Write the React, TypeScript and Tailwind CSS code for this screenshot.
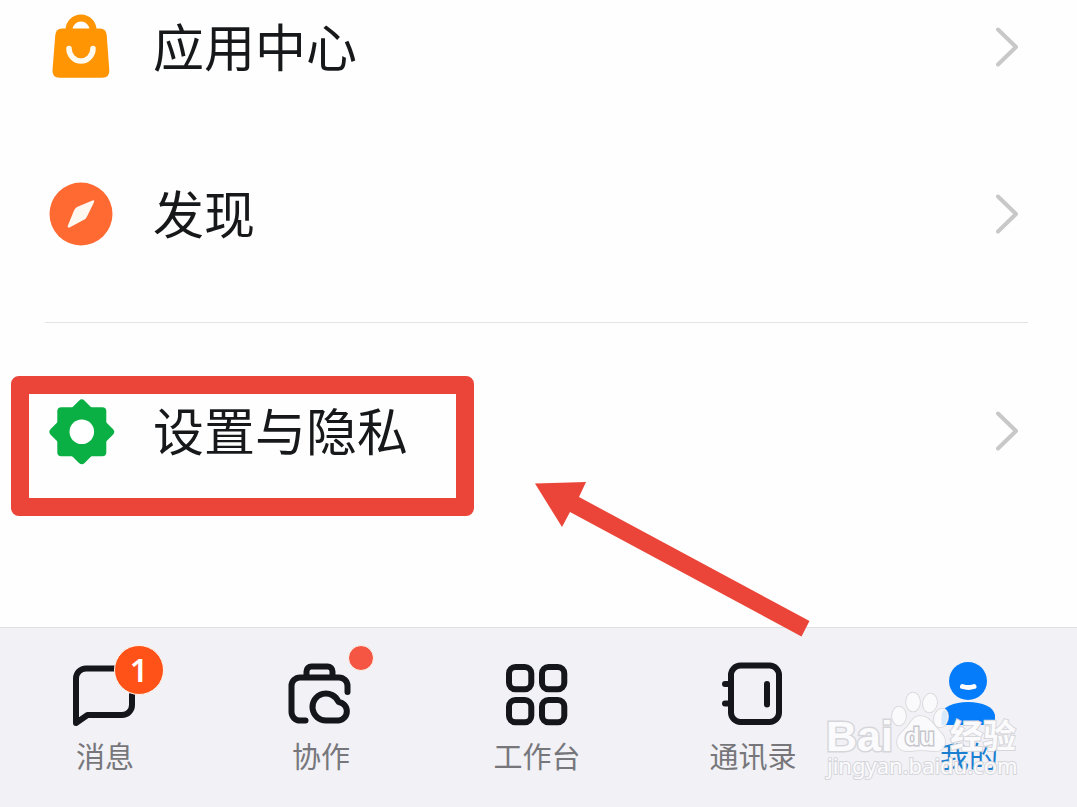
import type { ReactNode } from "react";

const BagIcon = () => (
  <svg viewBox="0 0 64 64" className="h-16 w-16 shrink-0 overflow-visible" aria-hidden="true">
    <path d="M20 17v-2a12 12 0 0 1 24 0v2" fill="none" stroke="#ff9502" strokeWidth="7" />
    <path
      d="M13 13.500h38q6 0 6.700 6.500l2.600 35q.5 7.700-7 7.700H10.500q-7.500 0-7-7.700l2.800-35q.7-6.500 6.700-6.500z"
      fill="#ff9502"
    />
    <path d="M20 33.500a12 12.500 0 0 0 24 0" fill="none" stroke="#fffaf0" strokeWidth="5.500" strokeLinecap="round" />
  </svg>
);

const CompassIcon = () => (
  <svg viewBox="0 0 64 64" className="h-16 w-16 shrink-0" aria-hidden="true">
    <circle cx="32" cy="32" r="31.500" fill="#ff6a33" />
    <path
      d="M28 25L43.500 18.400q2.500-.6 1.500 1.800L38 34.500q-1 2.500-3.500 3.600L20.500 45.600q-2.500.4-1.600-2L25 28.500q1-2.500 3-3.500z"
      fill="#fff8f0"
    />
  </svg>
);

const GearIcon = () => (
  <svg viewBox="0 0 64 64" className="h-16 w-16 shrink-0 overflow-visible" aria-hidden="true">
    <g fill="#0bb045">
      <rect x="8.300" y="8.300" width="49" height="49" rx="4" />
      <rect x="8.800" y="8.800" width="48" height="48" rx="4" transform="rotate(45 32.800 32.800)" />
    </g>
    <circle cx="32.800" cy="32.800" r="12.300" fill="#fff" />
  </svg>
);

const Chevron = () => (
  <svg viewBox="0 0 24 40" className="h-10 w-6 shrink-0" aria-hidden="true">
    <path d="M2 2.500l18 17.500L2 37.500" fill="none" stroke="#c8c8c8" strokeWidth="4" strokeLinecap="round" strokeLinejoin="round" />
  </svg>
);

function TabIcon({ children }: { children: ReactNode }) {
  return (
    <svg
      viewBox="0 0 72 72"
      className="h-[72px] w-[72px]"
      fill="none"
      stroke="#15151c"
      strokeWidth="6"
      strokeLinecap="round"
      strokeLinejoin="round"
      aria-hidden="true"
    >
      {children}
    </svg>
  );
}

const tabs = [
  {
    label: "消息",
    icon: (
      <TabIcon>
        <path d="M46 9.500H17a10 10 0 0 0-10 10V64L18.500 56H53a10 10 0 0 0 10-10V36" />
      </TabIcon>
    ),
    badge: (
      <span className="absolute -top-3.5 left-[45px] flex h-[50px] w-[50px] items-center justify-center rounded-full border border-[#fff4ea] bg-[#ff5219] font-['Noto_Sans',sans-serif] text-[32px] leading-none font-semibold text-white">
        1
      </span>
    ),
  },
  {
    label: "协作",
    icon: (
      <TabIcon>
        <path d="M21.500 17v-4.500a5 5 0 0 1 5-5h16a5 5 0 0 1 5 5V17" />
        <path d="M20.500 61.500H15a8.500 8.500 0 0 1-8.500-8.500V27a8.500 8.500 0 0 1 8.500-8.500h39a8.500 8.500 0 0 1 8.500 8.500v6" />
        <path d="M41 61.500A13.500 13.500 0 1 1 53.500 43a9.300 9.300 0 0 1 0 18.500z" />
      </TabIcon>
    ),
    badge: <span className="absolute -top-3.5 left-[63px] h-[26px] w-[26px] rounded-full border border-[#fff4ea] bg-[#f45643]" />,
  },
  {
    label: "工作台",
    icon: (
      <TabIcon>
        <rect x="8" y="8" width="22.300" height="22.300" rx="6.500" />
        <rect x="41" y="8" width="22.300" height="22.300" rx="6.500" />
        <rect x="8" y="41" width="22.300" height="22.300" rx="6.500" />
        <rect x="41" y="41" width="22.300" height="22.300" rx="6.500" />
      </TabIcon>
    ),
  },
  {
    label: "通讯录",
    icon: (
      <TabIcon>
        <rect x="14" y="6.500" width="48" height="56.500" rx="9.500" />
        <path d="M50 25v20.500" />
        <path d="M8 25h5M8 44.500h5" />
      </TabIcon>
    ),
  },
  {
    label: "我的",
    active: true,
    icon: (
      <TabIcon>
        <g stroke="none" fill="#057dfb">
          <circle cx="35" cy="22" r="19" />
          <path d="M8.500 66V56c1-8 12-13 26.500-13s25.500 5 27 13v10z" />
        </g>
        <path d="M29.500 27.500q6 2 11.500 0" stroke="#fff" strokeWidth="5" />
      </TabIcon>
    ),
  },
];

function Row({ icon, label }: { icon: ReactNode; label: string }) {
  return (
    <a href="#" className="flex h-16 items-center gap-10 pr-2 pl-1">
      {icon}
      <span className="flex-1 pb-1 text-[51px] leading-none text-[#17181a]">{label}</span>
      <Chevron />
    </a>
  );
}

function Watermark() {
  return (
    <svg
      viewBox="0 0 200 100"
      className="pointer-events-none absolute top-[59px] right-[54px] h-[100px] w-[200px]"
      fill="#fbfbfd"
      stroke="#d6d6da"
      strokeWidth="3"
      paintOrder="stroke"
    >
      <g fillOpacity="0.85" strokeWidth="1.500">
        <ellipse cx="76" cy="29" rx="7" ry="9.500" />
        <ellipse cx="90" cy="15" rx="7" ry="9.500" />
        <ellipse cx="107" cy="16" rx="7" ry="9.500" transform="rotate(10 107 16)" />
        <ellipse cx="118" cy="31" rx="7" ry="9.500" transform="rotate(15 118 31)" />
        <path d="M97 29c8 0 12 6 16 11 5 6 10 9 9 16-1 8-8 9-14 8-7-1-13-1-20 0-7 1-14-1-14-9 0-6 5-10 10-15 4-5 6-11 13-11z" />
      </g>
      <text x="3" y="64" className="font-['Liberation_Sans',sans-serif] text-[43px] font-bold">
        Bai
      </text>
      <text x="82" y="58" className="font-['Liberation_Sans',sans-serif] text-[24px] font-bold" stroke="#c6c6cb">
        du
      </text>
      <text x="127" y="61" className="font-['Noto_Sans_CJK_SC',sans-serif] text-[33px] font-bold" strokeWidth="2">
        经验
      </text>
      <text x="4" y="87" className="font-['Noto_Sans',sans-serif] text-[22px]" strokeWidth="2">
        jingyan.baidu.com
      </text>
    </svg>
  );
}

export default function App() {
  return (
    <div className="relative flex min-h-screen flex-col overflow-hidden bg-[#fefefe] font-['Noto_Sans_CJK_SC',sans-serif]">
      <main className="mr-[49px] ml-[45px] flex-1">
        <div className="flex flex-col gap-[103px] border-b border-[#e3e3e4] pt-[15px] pb-[76px]">
          <Row icon={<BagIcon />} label="应用中心" />
          <Row icon={<CompassIcon />} label="发现" />
        </div>
        <div className="py-[76px]">
          <Row icon={<GearIcon />} label="设置与隐私" />
        </div>
      </main>

      <nav className="relative border-t border-[#dedee2] bg-[#f1f1f6] pt-[31px] pb-9">
        <div className="-ml-[3px] grid grid-cols-5">
          {tabs.map(({ label, icon, badge, active }) => (
            <a key={label} href="#" className="flex flex-col items-center gap-2">
              <span className="relative">
                {icon}
                {badge}
              </span>
              <span className={`text-[29px] leading-8 ${active ? "text-[#1a7fd0]" : "text-[#77777b]"}`}>{label}</span>
            </a>
          ))}
        </div>
        <Watermark />
      </nav>

      {/* callout around the settings row */}
      <div className="pointer-events-none absolute top-[376px] left-[11px] h-[140px] w-[463px] rounded-lg border-[18px] border-[#ea4538]" />
      <svg viewBox="0 0 276 156" className="pointer-events-none absolute top-[481px] left-[534px] h-[156px] w-[276px]" aria-hidden="true">
        <path d="M1 2.500L52 1l-7 15L275.500 140l-8 15.500L36 31l-8 15z" fill="#ea4538" />
      </svg>
    </div>
  );
}
